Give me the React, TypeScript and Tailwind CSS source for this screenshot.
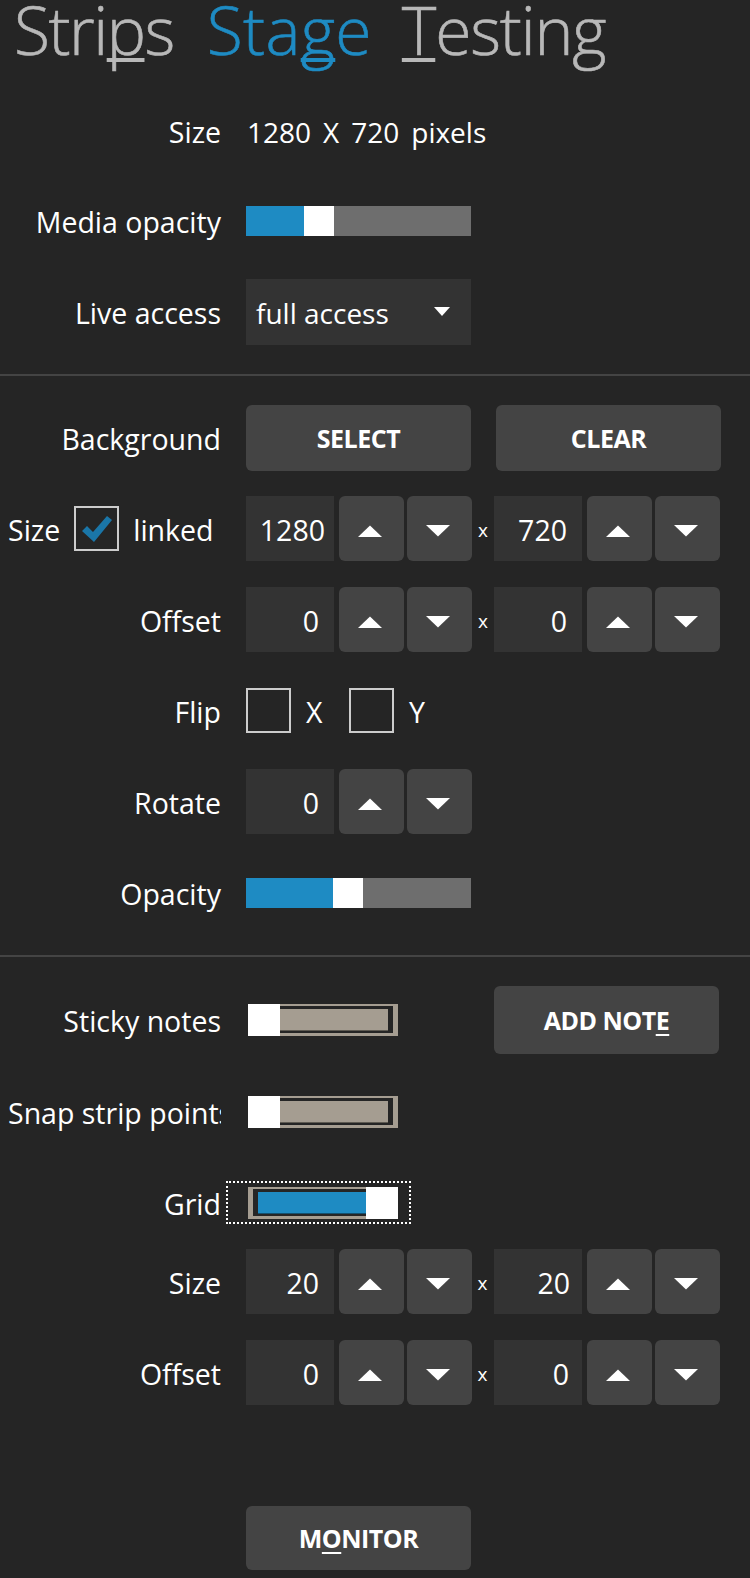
const font = "font-['Open_Sans','Liberation_Sans',sans-serif]";
const accessKey = "underline decoration-[4px] underline-offset-[3px] [text-decoration-skip-ink:none]";

function Arrow({ up }: { up?: boolean }) {
  return (
    <svg width="24" height="12" viewBox="0 0 24 12" aria-hidden="true">
      <path d={up ? "M12 0.5 L24 12 L0 12 Z" : "M0 0 L24 0 L12 11.5 Z"} fill="#fff" />
    </svg>
  );
}

function StepButton({ up }: { up?: boolean }) {
  return (
    <button className="flex h-full w-[65px] items-center justify-center rounded-md bg-[#444] pt-1 pr-1">
      <Arrow up={up} />
    </button>
  );
}

function Spinner({ value, pad = "pr-[15px]" }: { value: string; pad?: string }) {
  return (
    <div className="flex h-[65px] items-stretch">
      <div className={`flex w-[88px] items-center justify-end bg-[#333] pt-[3px] text-[28.5px] text-white ${pad}`}>
        {value}
      </div>
      <div className="ml-[5px] flex gap-[3px]">
        <StepButton up />
        <StepButton />
      </div>
    </div>
  );
}

function Label({ children }: { children: React.ReactNode }) {
  return <div className="w-[221px] shrink-0 pt-[2px] text-right text-[28.5px] whitespace-nowrap text-white">{children}</div>;
}

function Slider({ fill }: { fill: number }) {
  return (
    <div className="flex h-[30px] w-[225px]">
      <div className="bg-[#1e8bc3]" style={{ width: fill }} />
      <div className="w-[30px] bg-white" />
      <div className="flex-1 bg-[#6e6e6e]" />
    </div>
  );
}

function Toggle({ on }: { on?: boolean }) {
  return (
    <div className="relative ml-[2px] flex h-[32px] w-[150px]">
      {!on && <div className="h-full w-[32px] shrink-0 bg-white" />}
      <div className={`flex-1 bg-[#a59d91] pt-[2px] pb-[3px] ${on ? "pl-[5px]" : "pr-[5px]"}`}>
        <div className={`h-full bg-[#252525] pt-[3px] pb-[2px] ${on ? "pl-[5px]" : "pr-[5px]"}`}>
          <div className={`h-full border-b ${on ? "border-[#14506f] bg-[#1e8bc3]" : "border-[#5e5a52] bg-[#a59d91]"}`} />
        </div>
      </div>
      {on && <div className="h-full w-[32px] shrink-0 bg-white" />}
      {on && <div className="absolute -top-[6px] -right-[13px] -bottom-[5px] -left-[22px] outline-2 -outline-offset-2 outline-white outline-dotted" />}
    </div>
  );
}

function Box({ checked }: { checked?: boolean }) {
  return (
    <div className="flex h-[45px] w-[45px] shrink-0 items-center justify-center border-2 border-[#ccc]">
      {checked && (
        <svg width="30" height="26" viewBox="0 0 30 26" aria-hidden="true">
          <path d="M0 15 L5 10 L11 16 L25 0 L30 4 L12 26 Z" fill="#1a76a8" />
        </svg>
      )}
    </div>
  );
}

function Action({ children, className = "" }: { children: React.ReactNode; className?: string }) {
  return (
    <button className={`flex w-[225px] items-center justify-center rounded-md bg-[#444] pt-[2px] text-[25px] font-bold tracking-[-0.5px] text-white ${className}`}>
      {children}
    </button>
  );
}

function Times({ wide }: { wide?: boolean }) {
  return <div className={`pt-1 text-center text-[19px] text-white ${wide ? "w-[21px]" : "w-[22px]"}`}>x</div>;
}

function Divider() {
  return <div className="h-[2px] w-full bg-[#444]" />;
}

export default function App() {
  return (
    <div className={`${font} h-[1578px] w-[750px] overflow-hidden bg-[#252525]`}>
      <div className="flex h-[100px] pl-[14px] text-[66px] leading-[58px] font-light text-[#b8b8b8] [-webkit-text-stroke:0.6px_currentColor]">
        <span className="tracking-[-1.5px]">Stri<span className={accessKey}>p</span>s</span>
        <span className="ml-[33px] tracking-[0.3px] text-[#1e8bc3]">Sta<span className={accessKey}>g</span>e</span>
        <span className="ml-[30px] tracking-[-1.2px]"><span className={accessKey}>T</span>esting</span>
      </div>

      <div className="mt-[16px] flex h-[30px] items-center gap-[26px]">
        <Label>Size</Label>
        <div className="flex gap-[12px] pt-[2px] text-[28px] whitespace-nowrap text-white">
          <span>1280</span>
          <span>X</span>
          <span>720</span>
          <span>pixels</span>
        </div>
      </div>

      <div className="mt-[60px] flex h-[30px] items-center gap-[25px]">
        <Label>Media opacity</Label>
        <Slider fill={58} />
      </div>

      <div className="mt-[43px] flex h-[66px] items-center gap-[25px]">
        <Label>Live access</Label>
        <div className="flex h-full w-[225px] items-center justify-between bg-[#333] pt-[2px] pr-[20px] pl-[10px] text-[28px] text-white">
          <span>full access</span>
          <svg width="18" height="11" viewBox="0 0 18 11" aria-hidden="true" className="-mt-1">
            <path d="M1 1 L17 1 L9 10 Z" fill="#fff" />
          </svg>
        </div>
      </div>

      <div className="mt-[29px]"><Divider /></div>

      <div className="mt-[29px] flex h-[66px] items-stretch gap-[25px]">
        <Label><div className="flex h-full items-center justify-end">Background</div></Label>
        <Action>SELECT</Action>
        <Action>CLEAR</Action>
      </div>

      <div className="mt-[25px] flex h-[65px] items-center">
        <div className="flex w-[246px] shrink-0 items-center pl-[8px] text-[28.5px] text-white">
          <span className="pt-[4px]">Size</span>
          <div className="ml-[14px]"><Box checked /></div>
          <span className="ml-[14px] pt-[4px]">linked</span>
        </div>
        <Spinner value="1280" pad="pr-[9px]" />
        <Times />
        <Spinner value="720" />
      </div>

      <div className="mt-[26px] flex h-[65px] items-center">
        <div className="w-[246px] shrink-0 pt-[2px]"><Label>Offset</Label></div>
        <Spinner value="0" />
        <Times />
        <Spinner value="0" />
      </div>

      <div className="mt-[36px] flex h-[45px] items-center text-[28.5px] text-white">
        <div className="w-[246px] shrink-0 pt-[2px]"><Label>Flip</Label></div>
        <Box />
        <span className="ml-[15px] w-[43px] pt-[4px]">X</span>
        <Box />
        <span className="ml-[15px] pt-[4px]">Y</span>
      </div>

      <div className="mt-[36px] flex h-[65px] items-center">
        <div className="w-[246px] shrink-0 pt-[2px]"><Label>Rotate</Label></div>
        <Spinner value="0" />
      </div>

      <div className="mt-[44px] flex h-[30px] items-center gap-[25px]">
        <Label>Opacity</Label>
        <Slider fill={87} />
      </div>

      <div className="mt-[47px]"><Divider /></div>

      <div className="mt-[29px] flex h-[68px] items-center">
        <div className="w-[246px] shrink-0"><Label>Sticky notes</Label></div>
        <Toggle />
        <Action className="ml-[96px] h-full">ADD NOT<span className="underline decoration-2 underline-offset-4">E</span></Action>
      </div>

      <div className="mt-[42px] flex h-[32px] items-center">
        <div className="w-[246px] shrink-0">
          <div className="w-[221px] overflow-hidden pt-[2px] pl-[8px] text-[28.5px] whitespace-nowrap text-white">Snap strip points</div>
        </div>
        <Toggle />
      </div>

      <div className="mt-[59px] flex h-[32px] items-center">
        <div className="w-[246px] shrink-0"><Label>Grid</Label></div>
        <Toggle on />
      </div>

      <div className="mt-[30px] flex h-[65px] items-center">
        <div className="w-[246px] shrink-0 pt-[2px]"><Label>Size</Label></div>
        <Spinner value="20" />
        <Times wide />
        <div className="ml-px"><Spinner value="20" pad="pr-[12px]" /></div>
      </div>

      <div className="mt-[26px] flex h-[65px] items-center">
        <div className="w-[246px] shrink-0 pt-[2px]"><Label>Offset</Label></div>
        <Spinner value="0" />
        <Times wide />
        <div className="ml-px"><Spinner value="0" pad="pr-[13px]" /></div>
      </div>

      <div className="mt-[101px] flex h-[64px] pl-[246px]">
        <Action>M<span className="underline decoration-2 underline-offset-4">O</span>NITOR</Action>
      </div>
    </div>
  );
}
